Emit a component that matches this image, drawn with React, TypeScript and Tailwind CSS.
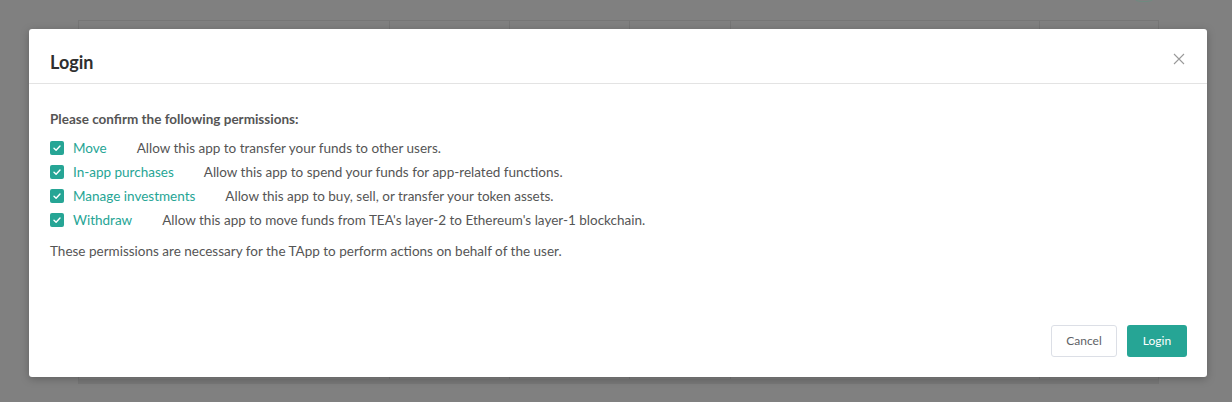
import React from 'react';

const perms = [
  { name: 'Move', desc: 'Allow this app to transfer your funds to other users.' },
  { name: 'In-app purchases', desc: 'Allow this app to spend your funds for app-related functions.' },
  { name: 'Manage investments', desc: 'Allow this app to buy, sell, or transfer your token assets.' },
  { name: 'Withdraw', desc: "Allow this app to move funds from TEA's layer-2 to Ethereum's layer-1 blockchain." },
];

function Check() {
  return (
    <span className="w-[14px] h-[14px] rounded-[2px] bg-[#26a595] flex items-center justify-center shrink-0">
      <svg width="10" height="10" viewBox="0 0 10 10" fill="none">
        <path d="M2 5.2 L4.1 7.2 L8 3" stroke="white" strokeWidth="1.4" strokeLinecap="round" strokeLinejoin="round" />
      </svg>
    </span>
  );
}

export default function App() {
  return (
    <div className="w-[1232px] h-[402px] bg-[#808080] relative overflow-hidden font-['Lato',sans-serif]">
      {/* page behind the overlay */}
      <div className="absolute left-[78px] top-[20px] w-[1081px] h-[364px] border border-[#767676] border-b-[5px] border-b-[#787878] flex">
        <div className="w-[311px] border-r border-[#767676]" />
        <div className="w-[120px] border-r border-[#767676]" />
        <div className="w-[120px] border-r border-[#767676]" />
        <div className="w-[101px] border-r border-[#767676]" />
        <div className="w-[309px] border-r border-[#767676]" />
      </div>
      <div className="absolute left-[1130px] top-[-20px] w-[28px] h-[22px] rounded-full border border-[#6f8a80]" />

      {/* modal */}
      <div className="absolute left-[29px] top-[29px] w-[1178px] h-[348px] bg-white rounded-[3px] shadow-[0_2px_8px_rgba(0,0,0,0.25)] flex flex-col">
        <div className="h-[55px] border-b border-[#e3e3e3] flex items-center justify-between pl-[21px] pr-[22px] pt-[13px]">
          <h2 className="text-[18px] font-bold text-[#2f2f2f]">Login</h2>
          <svg width="12" height="12" viewBox="0 0 12 12" className="mb-[7px]">
            <path d="M1 1 L11 11 M11 1 L1 11" stroke="#9a9a9a" strokeWidth="1.1" />
          </svg>
        </div>
        <div className="flex-1 pl-[21px] pt-[26px] text-[13.5px] text-[#555]">
          <p className="font-bold leading-[18px] mb-[8px]">Please confirm the following permissions:</p>
          <div className="flex flex-col">
            {perms.map((p) => (
              <div key={p.name} className="flex items-center h-[24px]">
                <Check />
                <span className="ml-[9px] mr-[30px] text-[#26a595]">{p.name}</span>
                <span>{p.desc}</span>
              </div>
            ))}
          </div>
          <p className="mt-[10px] leading-[18px]">These permissions are necessary for the TApp to perform actions on behalf of the user.</p>
        </div>
        <div className="flex justify-end gap-[10px] pr-[20px] pb-[20px]">
          <button className="w-[66px] h-[32px] border border-[#dcdfe6] rounded-[3px] text-[12px] text-[#606266]">Cancel</button>
          <button className="w-[60px] h-[32px] rounded-[3px] bg-[#26a595] text-[12px] text-white">Login</button>
        </div>
      </div>
    </div>
  );
}
